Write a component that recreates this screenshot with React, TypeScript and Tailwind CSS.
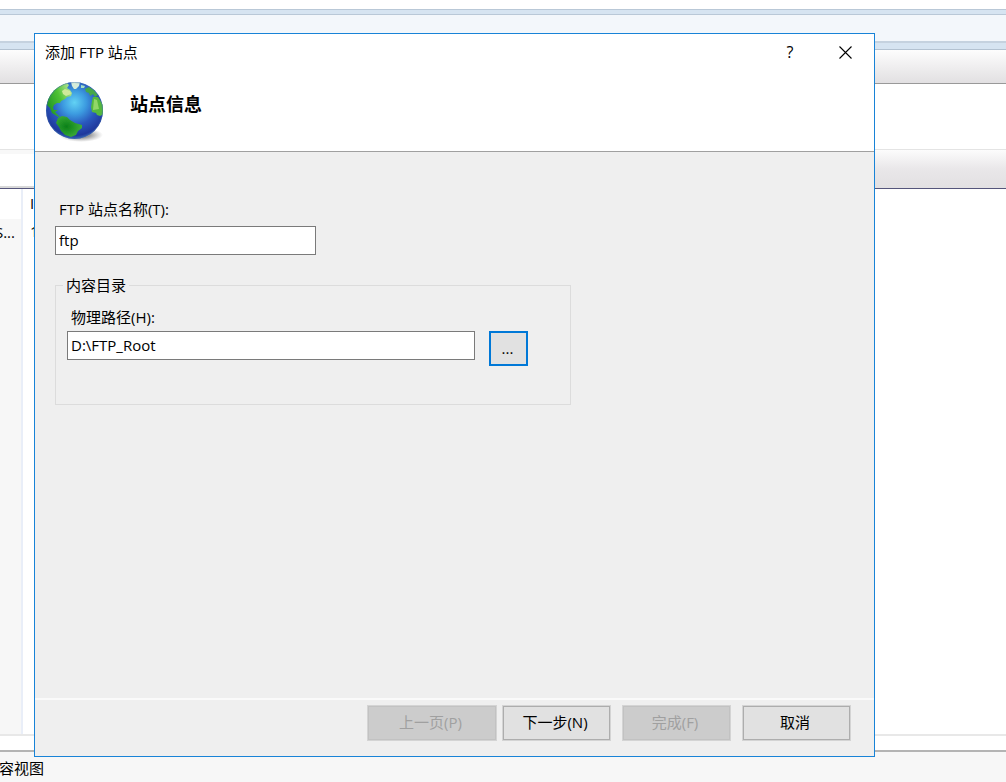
import { useState } from 'react';

function GlobeIcon() {
  return (
    <svg width="60" height="62" viewBox="0 0 60 62" aria-hidden="true">
      <defs>
        <radialGradient id="ocean" cx="0.5" cy="0.36" r="0.68">
          <stop offset="0" stopColor="#62d2f4" />
          <stop offset="0.3" stopColor="#3c9be0" />
          <stop offset="0.58" stopColor="#2a58bd" />
          <stop offset="0.85" stopColor="#1f389c" />
          <stop offset="1" stopColor="#4a86c4" />
        </radialGradient>
        <linearGradient id="north" x1="0" y1="0.7" x2="1" y2="0.1">
          <stop offset="0" stopColor="#1f9424" />
          <stop offset="0.5" stopColor="#4fc234" />
          <stop offset="1" stopColor="#c4e9a4" />
        </linearGradient>
        <radialGradient id="south" cx="0.4" cy="0.5" r="0.6">
          <stop offset="0" stopColor="#0b8019" />
          <stop offset="1" stopColor="#3fae38" />
        </radialGradient>
        <radialGradient id="shadow">
          <stop offset="0.4" stopColor="#777" stopOpacity="0.75" />
          <stop offset="1" stopColor="#999" stopOpacity="0" />
        </radialGradient>
        <filter id="soften">
          <feGaussianBlur stdDeviation="0.5" />
        </filter>
        <clipPath id="ball">
          <circle cx="29.5" cy="29.5" r="28.5" />
        </clipPath>
      </defs>
      <ellipse cx="36" cy="54" rx="22" ry="7" fill="url(#shadow)" />
      <circle cx="29.5" cy="29.5" r="28.5" fill="url(#ocean)" />
      <g clipPath="url(#ball)" filter="url(#soften)">
        {/* North and Central America */}
        <path
          d="M2 24 L3 16 L8 8 L14 3 L21 1 L24 4 L22 7 L25 9 L27 12 L26 15 L22 16 L20 18 L16 20 L15 22 L12 22 L9 24 L8 27 L9 29 L13 29 L10 31 L13 34 L16 37 L12 35 L7 32 L5 27 Z"
          fill="url(#north)"
        />
        {/* Greenland and the arctic islands */}
        <path d="M26 1 L35 1 L34 5 L31 8 L29 8 L27 5 Z" fill="#d5ecd9" />
        <path d="M17 10 L20 8 L25 10 L26 13 L21 15 L18 13 Z" fill="#cfe99a" />
        <path d="M36 4 L40 5 L39 7 L36 7 Z" fill="#a7dfc4" />
        {/* Europe */}
        <path d="M40 8 L44 6 L49 9 L53 14 L50 16 L48 13 L45 15 L44 12 L41 11 Z" fill="#45a848" />
        {/* Africa */}
        <path d="M48 16 L53 16 L59 25 L59 33 L55 35 L52 34 L51 32 L47 31 L46 26 L47 20 Z" fill="#55b83c" />
        <path d="M49 18 L52 19 L54 28 L48 29 Z" fill="#92d668" />
        {/* South America */}
        <path
          d="M13 37 L17 35 L22 36 L25 39 L30 42 L37 44 L37 47 L33 50 L31 54 L26 56 L20 54 L16 50 L14 46 L11 42 Z"
          fill="url(#south)"
        />
      </g>
      <circle cx="29.5" cy="29.5" r="28" fill="none" stroke="#3d6fae" strokeOpacity="0.4" />
    </svg>
  );
}

function Backdrop() {
  return (
    <div className="flex min-h-screen flex-col overflow-hidden bg-white">
      <div className="h-[9px]" />
      <div className="h-[6px] border-y border-[#b9c8d7] bg-[#d6e4f1]" />
      <div className="h-[26px] bg-[#f3f7fb]" />
      <div className="h-[9px] border-t-2 border-b border-t-[#c5d2df] border-b-[#b3c2d1] bg-[#d6e4f1]" />
      <div className="h-[34px] border-b border-[#999999] bg-linear-to-b from-[#fdfdfd] to-[#e2e0e2]" />
      <div className="h-[65px]" />
      <div className="flex h-[40px] border-t border-b border-t-[#e4e4e4] border-b-[#55557b]">
        <div className="w-[34px] border-t-4 border-b-2 border-t-[#f8f8f8] border-b-[#d8d8d8] bg-white" />
        <div className="flex-1 bg-linear-to-b from-[#fcfcfc] via-[#e9e7e9] to-[#e2e0e2]" />
      </div>
      <div className="flex flex-1">
        <div className="w-[23px] border-r-2 border-[#e9eef8] bg-[#f7f7f7]">
          <div className="h-[30px] bg-white" />
          <div className="flex h-[26px] items-center justify-end pr-[6px]">S...</div>
        </div>
        <div className="flex-1 pl-[7px]">
          <div className="leading-[28px]">IP</div>
          <div className="leading-[28px]">1</div>
        </div>
      </div>
      <div className="h-[16px] border-t-2 border-[#e8e8e8]" />
      <footer className="h-[32px] border-t-2 border-[#b4b4b4] bg-[#f7f7f7]">
        <div className="flex w-[44px] justify-end leading-[32px] whitespace-nowrap">容视图</div>
      </footer>
    </div>
  );
}

const inputClass = 'h-[29px] border border-[#7a7a7a] bg-white px-[3px] pb-[2px] text-black outline-none';
const buttonClass =
  'h-[34px] border border-[#adadad] bg-[#e1e1e1] pr-[3px] pb-[2px] outline outline-[#adadad]/40 disabled:border-[#c2c2c2] disabled:bg-[#cccccc] disabled:text-[#a0a0a0]';

function FtpSiteDialog() {
  const [siteName, setSiteName] = useState('ftp');
  const [path, setPath] = useState('D:\\FTP_Root');

  return (
    <section
      role="dialog"
      aria-labelledby="dialog-title"
      className="flex flex-1 flex-col border border-[#1883d7] bg-[#efefef]"
    >
      <header className="border-b border-[#a0a0a0] bg-white">
        <div className="flex h-[36px] items-center justify-between pl-[10px]">
          <h1 id="dialog-title">添加 FTP 站点</h1>
          <div className="flex">
            <button type="button" aria-label="帮助" className="h-[36px] w-[52px] text-base">
              ?
            </button>
            <button type="button" aria-label="关闭" className="flex h-[36px] w-[58px] items-center justify-center">
              <svg width="13" height="13" viewBox="0 0 13 13" stroke="#000" strokeWidth="1.1">
                <path d="M0.5 0.5 L12.5 12.5 M12.5 0.5 L0.5 12.5" />
              </svg>
            </button>
          </div>
        </div>
        <div className="flex h-[81px] items-start gap-[25px] pt-[11px] pl-[10px]">
          <GlobeIcon />
          <h2 className="pt-[11px] text-lg leading-6 font-bold">站点信息</h2>
        </div>
      </header>

      <main className="flex flex-1 flex-col items-start pt-[46px] pl-5">
        <label htmlFor="site-name" className="pl-1">
          FTP 站点名称(T):
        </label>
        <input
          id="site-name"
          type="text"
          value={siteName}
          onChange={(e) => setSiteName(e.target.value)}
          className={`${inputClass} mt-[6px] w-[261px]`}
        />

        <fieldset className="mt-[19px] h-[131px] w-[516px] max-w-full border border-[#dcdcdc] px-[11px]">
          <legend className="-ml-1 px-[3px]">内容目录</legend>
          <div className="flex flex-col pt-[10px]">
            <label htmlFor="physical-path" className="pl-1">
              物理路径(H):
            </label>
            <div className="mt-[3px] flex items-start gap-[14px]">
              <input
                id="physical-path"
                type="text"
                value={path}
                onChange={(e) => setPath(e.target.value)}
                className={`${inputClass} w-[408px]`}
              />
              <button
                type="button"
                aria-label="浏览"
                className="h-[35px] w-[39px] border-2 border-[#0078d7] bg-[#e1e1e1] pr-[2px] pb-[2px]"
              >
                ...
              </button>
            </div>
          </div>
        </fieldset>
      </main>

      <footer className="flex h-[58px] justify-end gap-[13px] border-t-2 border-[#fafafa] pt-[6px] pr-6">
        <div className="flex gap-[7px]">
          <button type="button" disabled className={`${buttonClass} w-[128px]`}>
            上一页(P)
          </button>
          <button type="button" className={`${buttonClass} w-[107px]`}>
            下一步(N)
          </button>
        </div>
        <button type="button" disabled className={`${buttonClass} w-[107px]`}>
          完成(F)
        </button>
        <button type="button" className={`${buttonClass} w-[107px]`}>
          取消
        </button>
      </footer>
    </section>
  );
}

export default function App() {
  return (
    <div className="relative font-['Open_Sans','Noto_Sans_CJK_SC',sans-serif] text-[15px] leading-[22px] text-black">
      <Backdrop />
      <div className="absolute inset-0 flex pt-[33px] pr-[131px] pb-[25px] pl-[34px]">
        <FtpSiteDialog />
      </div>
    </div>
  );
}
